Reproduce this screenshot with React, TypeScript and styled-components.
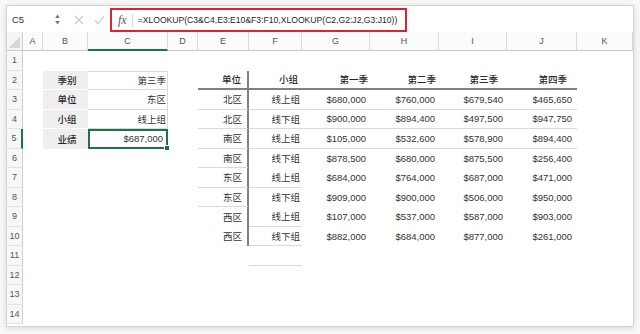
import React from "react";
import styled, { createGlobalStyle } from "styled-components";

const GlobalStyle = createGlobalStyle`
  html, body { margin: 0; padding: 0; background: #f7f7f7; }
  body { font-family: "Liberation Sans", "Noto Sans CJK SC", sans-serif; }
`;

const GREEN = "#1f7244";
const DARK = "2px solid #808080";
const LIGHT = "1px solid #d9d9d9";

const Page = styled.div`
  width: 640px;
  height: 334px;
  box-sizing: border-box;
  padding: 6px 7px 0 7px;
`;

const Window = styled.div`
  width: 626px;
  height: 320px;
  background: #fff;
  overflow: hidden;
  box-shadow: 0 0 0 1px #d4d4d4, 0 1px 6px rgba(0, 0, 0, 0.18);
  display: flex;
  flex-direction: column;
`;

const FormulaBar = styled.div`
  height: 26px;
  flex: none;
  display: flex;
  align-items: stretch;
  background: #fff;
`;

const NameBox = styled.div`
  width: 57px;
  box-sizing: border-box;
  padding: 1px 4px 0 5px;
  display: flex;
  align-items: center;
  justify-content: space-between;
  font-size: 9.5px;
  color: #333;
`;

const ToolButton = styled.div`
  width: 20px;
  display: flex;
  align-items: center;
  justify-content: center;
  padding-top: 1px;
`;

const ButtonGroup = styled.div`
  display: flex;
  margin-left: 5px;
`;

const FormulaBox = styled.div`
  margin: 2px 0 0 1px;
  width: 297px;
  box-sizing: border-box;
  border: 2px solid #d9262c;
  display: flex;
  align-items: center;
`;

const Fx = styled.span`
  padding-left: 6px;
  font-family: "Liberation Serif", serif;
  font-style: italic;
  font-size: 12px;
  color: #555;
`;

const FxDivider = styled.span`
  width: 1px;
  height: 13px;
  background: #dadada;
  margin: 0 5px 0 5px;
`;

const FormulaText = styled.span`
  font-size: 8.6px;
  color: #1f1f1f;
  white-space: nowrap;
`;

const Sheet = styled.div`
  display: grid;
  grid-template-columns: 16px 20px 45px 80px 30px 51px 53px 68px 69px 68px 70px 56px;
  grid-template-rows: 19px repeat(14, 19.5px);
`;

const Corner = styled.div`
  background: #f5f5f5;
  border-right: 1px solid #d0d0d0;
  border-bottom: 1px solid #c8c8c8;
  box-sizing: border-box;
  position: relative;
  &::after {
    content: "";
    position: absolute;
    right: 2px;
    bottom: 2px;
    width: 12px;
    height: 12px;
    background: linear-gradient(to top left, #d6d6d6 50%, transparent 50%);
  }
`;

const ColHead = styled.div<{ $sel?: boolean }>`
  box-sizing: border-box;
  background: #fbfbfb;
  border-right: 1px solid #dadada;
  border-bottom: ${(p) => (p.$sel ? `2px solid ${GREEN}` : "1px solid #c8c8c8")};
  display: flex;
  align-items: center;
  justify-content: center;
  font-size: 9px;
  color: #555;
`;

const RowHead = styled.div<{ $sel?: boolean }>`
  box-sizing: border-box;
  background: #f7f7f7;
  border-right: ${(p) => (p.$sel ? `2px solid ${GREEN}` : "1px solid #d0d0d0")};
  border-bottom: 1px solid #e3e3e3;
  display: flex;
  align-items: center;
  justify-content: center;
  font-size: 9px;
  color: #555;
`;

type CellProps = {
  $align?: "left" | "center" | "right";
  $pr?: number;
  $pl?: number;
  $bg?: string;
  $bb?: string;
  $bt?: string;
  $br?: string;
  $bold?: boolean;
};

const Cell = styled.div<CellProps>`
  box-sizing: border-box;
  display: flex;
  align-items: center;
  justify-content: ${(p) =>
    p.$align === "center" ? "center" : p.$align === "right" ? "flex-end" : "flex-start"};
  padding: 0 ${(p) => p.$pr ?? 0}px 0 ${(p) => p.$pl ?? 0}px;
  font-size: 9.5px;
  color: ${(p) => (p.$bold ? "#2a2a2a" : "#333")};
  font-weight: ${(p) => (p.$bold ? 500 : 400)};
  white-space: nowrap;
  background: ${(p) => p.$bg ?? "transparent"};
  border-bottom: ${(p) => p.$bb ?? "none"};
  border-top: ${(p) => p.$bt ?? "none"};
  border-right: ${(p) => p.$br ?? "none"};
`;

const SelectedCell = styled(Cell)`
  border: 2px solid ${GREEN};
  position: relative;
  &::after {
    content: "";
    position: absolute;
    right: -4px;
    bottom: -4px;
    width: 4px;
    height: 4px;
    background: ${GREEN};
    border: 1px solid #fff;
  }
`;

const COLS = ["A", "B", "C", "D", "E", "F", "G", "H", "I", "J", "K"];

const data: string[][] = [
  ["北区", "线上组", "$680,000", "$760,000", "$679,540", "$465,650"],
  ["北区", "线下组", "$900,000", "$894,400", "$497,500", "$947,750"],
  ["南区", "线上组", "$105,000", "$532,600", "$578,900", "$894,400"],
  ["南区", "线下组", "$878,500", "$680,000", "$875,500", "$256,400"],
  ["东区", "线上组", "$684,000", "$764,000", "$687,000", "$471,000"],
  ["东区", "线下组", "$909,000", "$900,000", "$506,000", "$950,000"],
  ["西区", "线上组", "$107,000", "$537,000", "$587,000", "$903,000"],
  ["西区", "线下组", "$882,000", "$684,000", "$877,000", "$261,000"],
];

const headers = ["单位", "小组", "第一季", "第二季", "第三季", "第四季"];
const headerPad = [6, 4, 2, 3, 9, 10];
const dataPad = [5, 2, 4, 4, 4, 5];

const leftLabels = ["季别", "单位", "小组", "业绩"];
const leftValues = ["第三季", "东区", "线上组", "$687,000"];

// which columns (E=0..J=5) have a bottom rule on each row
const rowRules: Record<number, number[]> = {
  3: [0, 1, 2, 3, 4, 5],
  4: [0, 1, 2, 3, 4, 5],
  5: [0, 1, 2, 3, 4, 5],
  6: [0],
  7: [0, 1],
  8: [0],
  9: [1],
  10: [1],
  11: [1],
};

function renderCell(row: number, col: number) {
  const key = `${row}-${col}`;
  if (row >= 2 && row <= 5 && col === 1) {
    return (
      <Cell
        key={key}
        $align="center"
        $pl={3}
        $bg="#efefef"
        $bold
        $bb={row < 5 ? "1px solid #fff" : undefined}
      >
        {leftLabels[row - 2]}
      </Cell>
    );
  }
  if (row >= 2 && row <= 5 && col === 2) {
    if (row === 5) {
      return (
        <SelectedCell key={key} $align="right" $pr={3}>
          {leftValues[3]}
        </SelectedCell>
      );
    }
    return (
      <Cell
        key={key}
        $align="right"
        $pr={1}
        $bb={LIGHT}
        $br={LIGHT}
        $bt={row === 2 ? LIGHT : undefined}
      >
        {leftValues[row - 2]}
      </Cell>
    );
  }
  if (col >= 4 && col <= 9) {
    const c = col - 4;
    if (row === 2) {
      return (
        <Cell key={key} $align="right" $pr={headerPad[c]} $bold $bb={DARK} $br={c === 0 ? DARK : undefined}>
          {headers[c]}
        </Cell>
      );
    }
    const rules = rowRules[row] ?? [];
    const bb = rules.includes(c) ? LIGHT : undefined;
    if (row >= 3 && row <= 10) {
      return (
        <Cell key={key} $align="right" $pr={dataPad[c]} $bb={bb} $br={c === 0 ? DARK : undefined}>
          {data[row - 3][c]}
        </Cell>
      );
    }
    return <Cell key={key} $bb={bb} />;
  }
  return <Cell key={key} />;
}

const CrossIcon = () => (
  <svg width="10" height="10" viewBox="0 0 10 10">
    <path d="M1 1 L9 9 M9 1 L1 9" stroke="#c8c8c8" strokeWidth="1.2" fill="none" />
  </svg>
);

const CheckIcon = () => (
  <svg width="11" height="10" viewBox="0 0 11 10">
    <path d="M1 5.5 L4 8.5 L10 1" stroke="#c8c8c8" strokeWidth="1.2" fill="none" />
  </svg>
);

const SpinnerIcon = () => (
  <svg width="5" height="11" viewBox="0 0 5 11">
    <path d="M2.5 0.5 L4.8 4 L0.2 4 Z" fill="#777" />
    <path d="M2.5 10.5 L4.8 7 L0.2 7 Z" fill="#777" />
  </svg>
);

export default function App() {
  const rows = Array.from({ length: 14 }, (_, i) => i + 1);
  return (
    <>
      <GlobalStyle />
      <Page>
        <Window>
          <FormulaBar>
            <NameBox>
              <span>C5</span>
              <SpinnerIcon />
            </NameBox>
            <ButtonGroup>
              <ToolButton>
                <CrossIcon />
              </ToolButton>
              <ToolButton>
                <CheckIcon />
              </ToolButton>
            </ButtonGroup>
            <FormulaBox>
              <Fx>fx</Fx>
              <FxDivider />
              <FormulaText>=XLOOKUP(C3&amp;C4,E3:E10&amp;F3:F10,XLOOKUP(C2,G2:J2,G3:J10))</FormulaText>
            </FormulaBox>
          </FormulaBar>
          <Sheet>
            <Corner />
            {COLS.map((c) => (
              <ColHead key={c} $sel={c === "C"}>
                {c}
              </ColHead>
            ))}
            {rows.map((r) => (
              <React.Fragment key={r}>
                <RowHead $sel={r === 5}>{r}</RowHead>
                {COLS.map((_, ci) => renderCell(r, ci))}
              </React.Fragment>
            ))}
          </Sheet>
        </Window>
      </Page>
    </>
  );
}
